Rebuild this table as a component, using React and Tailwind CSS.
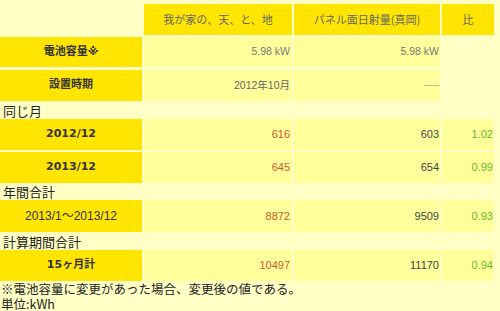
import React from "react";

function Label({ children, bold = true }) {
  return (
    <div
      className={`w-[142px] shrink-0 bg-[#ffe500] flex items-center justify-center text-[#333] ${
        bold
          ? "font-bold text-[11px] font-['DejaVu_Sans','Noto_Sans_CJK_JP',sans-serif]"
          : "text-[12px] font-['Liberation_Sans','Noto_Sans_CJK_JP',sans-serif]"
      }`}
    >
      {children}
    </div>
  );
}

function DataRow({ label, bold = true, a, b, c, h, mt = "" }) {
  return (
    <div className={`flex gap-[2px] ${h} ${mt}`}>
      <Label bold={bold}>{label}</Label>
      <div className="w-[148px] shrink-0 bg-[#ffff9c] flex items-center justify-end pr-[2px] text-[11px] text-[#cc5a2a] font-['Liberation_Sans',sans-serif]">{a}</div>
      <div className="w-[146px] shrink-0 bg-[#ffff9c] flex items-center justify-end pr-[1px] text-[11px] text-[#444] font-['Liberation_Sans',sans-serif]">{b}</div>
      <div className="w-[52px] shrink-0 bg-[#ffff9c] flex items-center justify-end pr-[1px] text-[11px] text-[#6cb52e] font-['Liberation_Sans',sans-serif]">{c}</div>
    </div>
  );
}

function Section({ children, h }) {
  return (
    <div className={`${h} flex items-center pl-[3px] text-[13px] text-[#222] leading-none font-['Noto_Sans_CJK_JP',sans-serif]`}>
      {children}
    </div>
  );
}

export default function App() {
  return (
    <div className="w-[500px] h-[311px] bg-[#ffffc6] pt-[4px] overflow-hidden">
      <div className="flex gap-[2px] h-[31px] text-[11px] text-[#666] font-['Noto_Sans_CJK_JP',sans-serif]">
        <div className="w-[142px] shrink-0" />
        <div className="w-[148px] shrink-0 bg-[#ffe500] flex items-center justify-center">我が家の、天、と、地</div>
        <div className="w-[146px] shrink-0 bg-[#ffe500] flex items-center justify-center">パネル面日射量(真岡)</div>
        <div className="w-[52px] shrink-0 bg-[#ffe500] flex items-center justify-center">比</div>
      </div>
      <div className="flex gap-[2px] h-[30px] mt-[2px]">
        <Label>電池容量※</Label>
        <div className="w-[148px] shrink-0 bg-[#ffff9c] flex items-center justify-end pr-[2px] text-[10.5px] text-[#777] font-['Liberation_Sans',sans-serif]">5.98 kW</div>
        <div className="w-[146px] shrink-0 bg-[#ffff9c] flex items-center justify-end pr-[1px] text-[10.5px] text-[#777] font-['Liberation_Sans',sans-serif]">5.98 kW</div>
      </div>
      <div className="flex gap-[2px] h-[31px] mt-[3px]">
        <Label>設置時期</Label>
        <div className="w-[148px] shrink-0 bg-[#ffff9c] flex items-center justify-end pr-[2px] text-[10.5px] text-[#666] font-['Liberation_Sans','Noto_Sans_CJK_JP',sans-serif]">2012年10月</div>
        <div className="w-[146px] shrink-0 bg-[#ffff9c] flex items-center justify-end pr-[1px] text-[9px] text-[#888] font-['Liberation_Sans',sans-serif]">-----</div>
      </div>
      <Section h="h-[18px]">同じ月</Section>
      <DataRow label="2012/12" a="616" b="603" c="1.02" h="h-[31px]" />
      <DataRow label="2013/12" a="645" b="654" c="0.99" h="h-[31px]" mt="mt-[2px]" />
      <Section h="h-[17px]">年間合計</Section>
      <DataRow label="2013/1～2013/12" bold={false} a="8872" b="9509" c="0.93" h="h-[32px]" />
      <Section h="h-[18px]">計算期間合計</Section>
      <DataRow label="15ヶ月計" a="10497" b="11170" c="0.94" h="h-[31px]" />
      <div className="pl-[1px] text-[12.5px] leading-[15px] text-[#222] font-['Noto_Sans_CJK_JP',sans-serif]">
        <div>※電池容量に変更があった場合、変更後の値である。</div>
        <div>単位:kWh</div>
      </div>
    </div>
  );
}
